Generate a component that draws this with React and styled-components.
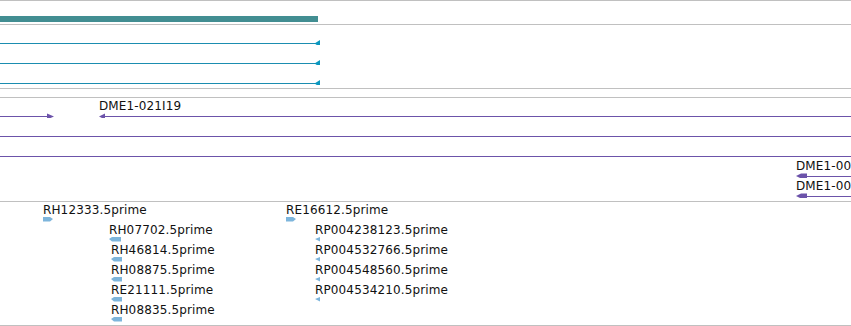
import styled, { createGlobalStyle } from 'styled-components';

const TEAL_BAR = '#428e92';
const TEAL_LINE = '#1b8db0';
const TEAL_HEAD = '#0b97bf';
const PURPLE = '#6c53aa';
const EST = '#7db5dc';
const W = 851;

const GlobalStyle = createGlobalStyle`
  html, body {
    margin: 0;
    padding: 0;
    background: #fff;
  }
  body {
    font-family: 'DejaVu Sans', 'Liberation Sans', sans-serif;
  }
`;

const Panel = styled.div`
  width: ${W}px;
  height: 326px;
  overflow: hidden;
  border-top: 1px solid #c0c0c0;
  box-sizing: border-box;
  display: flex;
  flex-direction: column;
`;

const Track = styled.div`
  flex: none;
  padding: ${p => p.$pad || '0 0 3px'};
  border-bottom: 1px solid #c0c0c0;
  display: flex;
  flex-direction: column;
`;

const Row = styled.div`
  position: relative;
  flex: none;
  height: ${p => p.$h || 20}px;
`;

const Bar = styled.div`
  position: absolute;
  top: 0;
  left: ${p => p.$x}px;
  width: ${p => p.$w}px;
  height: 6px;
  background: ${TEAL_BAR};
`;

const Drawing = styled.svg`
  position: absolute;
  top: 0;
  left: 0;
  display: block;
`;

const Label = styled.span`
  position: absolute;
  top: 1px;
  left: ${p => p.$x}px;
  font-size: 12px;
  line-height: 14px;
  letter-spacing: 0.13px;
  color: #111;
  white-space: nowrap;
`;

const ests = [
  [{ label: 'RH12333.5prime', x: 43, dir: 'fwd', w: 10 }, { label: 'RE16612.5prime', x: 286, dir: 'fwd', w: 10 }],
  [{ label: 'RH07702.5prime', x: 109, dir: 'rev', w: 12 }, { label: 'RP004238123.5prime', x: 315, dir: 'rev', w: 5 }],
  [{ label: 'RH46814.5prime', x: 111, dir: 'rev', w: 11 }, { label: 'RP004532766.5prime', x: 315, dir: 'rev', w: 5 }],
  [{ label: 'RH08875.5prime', x: 111, dir: 'rev', w: 11 }, { label: 'RP004548560.5prime', x: 315, dir: 'rev', w: 5 }],
  [{ label: 'RE21111.5prime', x: 111, dir: 'rev', w: 11 }, { label: 'RP004534210.5prime', x: 315, dir: 'rev', w: 5 }],
  [{ label: 'RH08835.5prime', x: 111, dir: 'rev', w: 11 }],
];

// small est glyph: a block with one pointed end
function estShape({ x, w, dir }) {
  if (w <= 5) return `${x},17 ${x + w},15 ${x + w},19.5`;
  if (dir === 'fwd') return `${x},15 ${x + w - 3},15 ${x + w},17 ${x + w - 3},19.5 ${x},19.5`;
  return `${x},17 ${x + 3},15 ${x + w},15 ${x + w},19.5 ${x + 3},19.5`;
}

export default function App() {
  return (
    <>
      <GlobalStyle />
      <Panel>
        <Track $pad="15px 0 0">
          <Row $h={8}>
            <Bar $x={0} $w={318} />
          </Row>
        </Track>

        <Track>
          {[0, 1, 2].map(i => (
            <Row key={i}>
              <Drawing width={W} height={20}>
                <line x1={0} x2={316} y1={18.5} y2={18.5} stroke={TEAL_LINE} />
                <polygon points="314.5,18.5 320,15 320,22" fill={TEAL_HEAD} />
              </Drawing>
            </Row>
          ))}
        </Track>

        <Track $pad="8px 0 0" />

        <Track>
          <Row>
            <Drawing width={W} height={20}>
              <line x1={0} x2={49} y1={18.5} y2={18.5} stroke={PURPLE} />
              <polygon points="47,15.5 54,18.5 47,21.5" fill={PURPLE} />
              <line x1={103} x2={W} y1={18.5} y2={18.5} stroke={PURPLE} />
              <polygon points="99,18.5 105,15.5 105,21.5" fill={PURPLE} />
            </Drawing>
            <Label $x={99}>DME1-021I19</Label>
          </Row>
          {[0, 1].map(i => (
            <Row key={i}>
              <Drawing width={W} height={20}>
                <line x1={0} x2={W} y1={18.5} y2={18.5} stroke={PURPLE} />
              </Drawing>
            </Row>
          ))}
          {['DME1-004K17', 'DME1-009B05'].map(name => (
            <Row key={name}>
              <Drawing width={W} height={20}>
                <line x1={804} x2={W} y1={18.5} y2={18.5} stroke={PURPLE} />
                <polygon points="796,18 801,15.5 807,15.5 807,20.5 801,20.5" fill={PURPLE} />
              </Drawing>
              <Label $x={796}>{name}</Label>
            </Row>
          ))}
        </Track>

        <Track>
          {ests.map((row, i) => (
            <Row key={i}>
              <Drawing width={W} height={20}>
                {row.map(f => (
                  <polygon key={f.label} points={estShape(f)} fill={EST} />
                ))}
              </Drawing>
              {row.map(f => (
                <Label key={f.label} $x={f.x}>{f.label}</Label>
              ))}
            </Row>
          ))}
        </Track>
      </Panel>
    </>
  );
}
